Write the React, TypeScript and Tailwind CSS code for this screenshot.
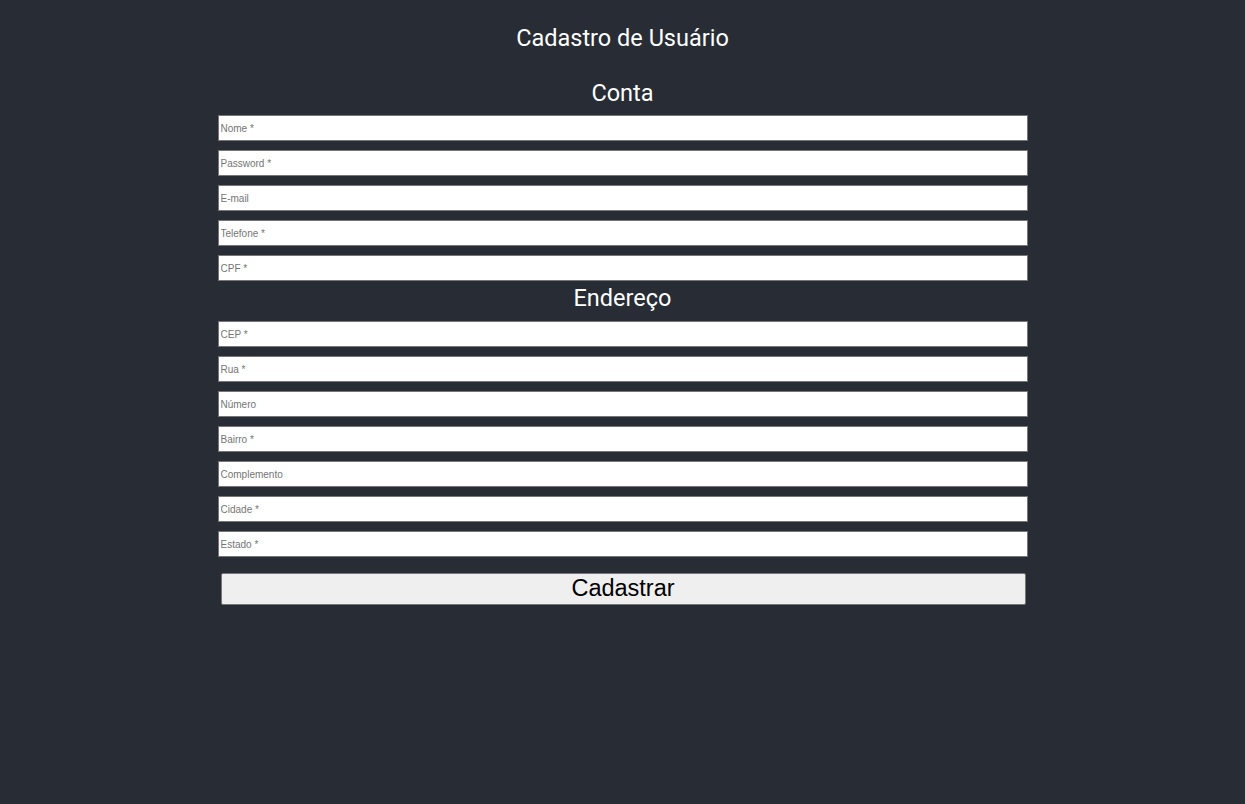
import React from 'react';

const contaFields = ['Nome *', 'Password *', 'E-mail', 'Telefone *', 'CPF *'];
const enderecoFields = ['CEP *', 'Rua *', 'Número', 'Bairro *', 'Complemento', 'Cidade *', 'Estado *'];

const Field: React.FC<{ placeholder: string }> = ({ placeholder }) => (
  <input
    type="text"
    placeholder={placeholder}
    className="block w-full h-[26px] bg-white border border-[#767676] px-[2px] text-[10px] text-black placeholder:text-[#757575] outline-none font-['Liberation_Sans',Arial,sans-serif]"
  />
);

const App: React.FC = () => {
  return (
    <div className="min-h-screen bg-[#282c34] pt-[24px] font-['Roboto',sans-serif]">
      <h1 className="text-center text-white text-[23.5px] leading-[28px]">Cadastro de Usuário</h1>

      <form className="w-[810px] mx-auto mt-[27px]" onSubmit={(e) => e.preventDefault()}>
        <h2 className="text-center text-white text-[23.5px] leading-[28px] mb-[8px]">Conta</h2>
        <div className="flex flex-col gap-[9px]">
          {contaFields.map((f) => (
            <Field key={f} placeholder={f} />
          ))}
        </div>

        <h2 className="text-center text-white text-[23.5px] leading-[28px] mt-[3px] mb-[9px]">Endereço</h2>
        <div className="flex flex-col gap-[9px]">
          {enderecoFields.map((f) => (
            <Field key={f} placeholder={f} />
          ))}
        </div>

        <button
          type="submit"
          className="block ml-[3px] mt-[16px] w-[805px] h-[32px] bg-[#efefef] border border-[#767676] rounded-[2px] text-black text-[23.5px] leading-[26px] pb-[2px] font-['Liberation_Sans',Arial,sans-serif]"
        >
          Cadastrar
        </button>
      </form>
    </div>
  );
};

export default App;
